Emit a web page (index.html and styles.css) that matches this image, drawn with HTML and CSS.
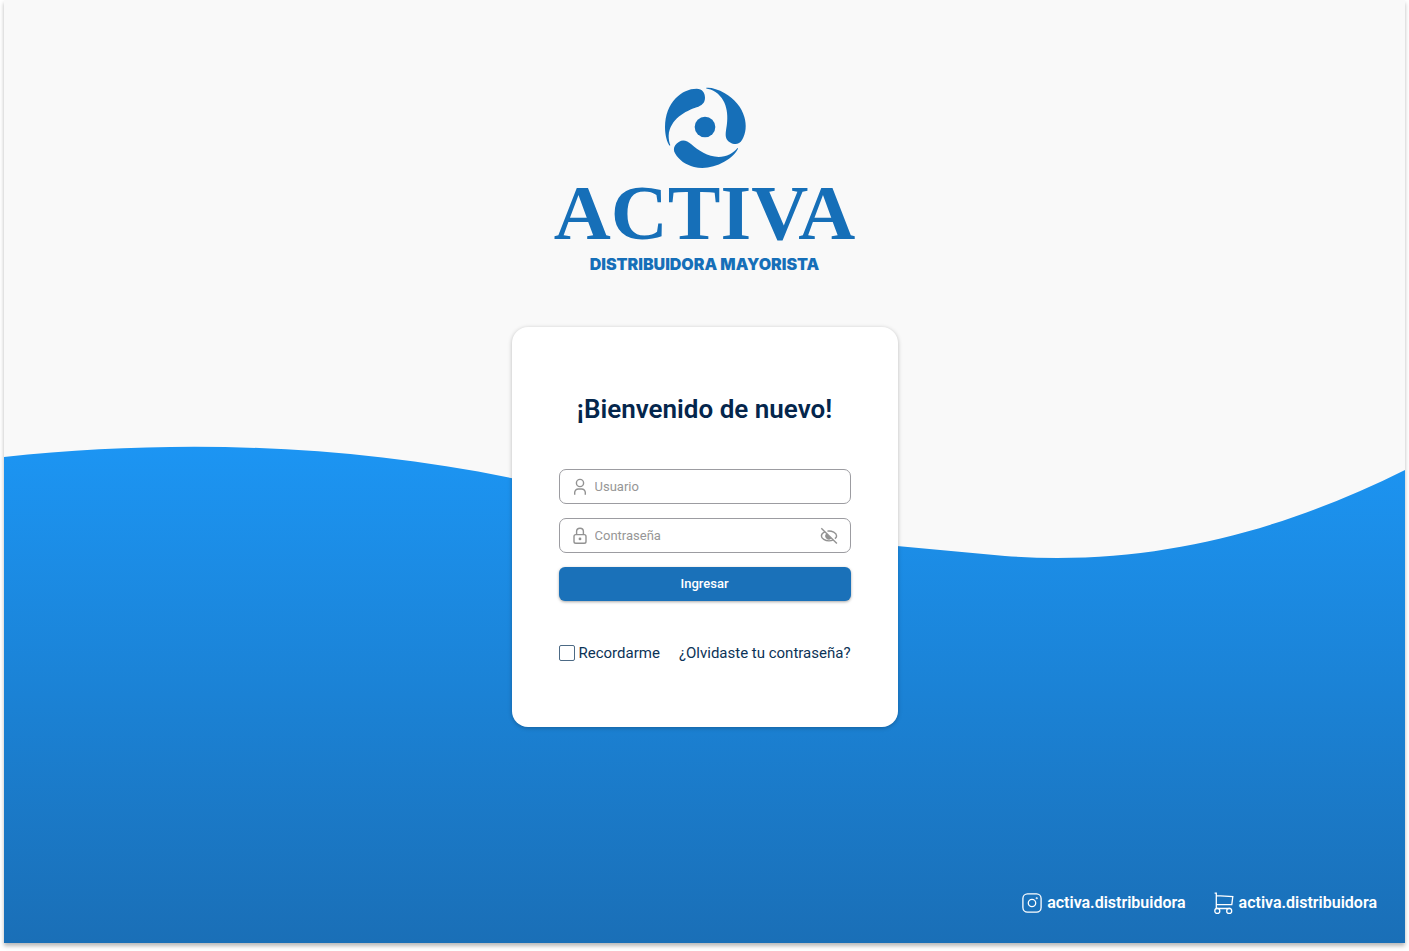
FILE: index.html
```html
<!DOCTYPE html>
<html lang="es">
<head>
<meta charset="utf-8">
<meta name="viewport" content="width=device-width, initial-scale=1">
<title>Activa - Ingresar</title>
<link rel="stylesheet" href="styles.css">
</head>
<body>
<div class="frame">
  <svg class="wave" viewBox="0 0 1401 943" preserveAspectRatio="none" aria-hidden="true">
    <defs>
      <linearGradient id="sea" gradientUnits="userSpaceOnUse" x1="0" y1="446" x2="0" y2="943">
        <stop offset="0" stop-color="#1c95f3"/>
        <stop offset="1" stop-color="#1a6fb7"/>
      </linearGradient>
    </defs>
    <path fill="url(#sea)" d="M0 457C170 439 340 444 507 478C640 506 760 534 893 546L1001 556C1150 567 1280 530 1401 470V943H0Z"/>
  </svg>

  <header class="brand">
    <svg class="brand-mark" viewBox="24 30 252 252" fill="#166fb8" aria-hidden="true">
      <circle cx="150" cy="156" r="31"/>
      <path id="blade" d="M44 212C36 202 30 180 30 156C30 122 42 90 62 70C80 51 102 41 125 41C142 41 150 53 150 68C150 84 140 91 125 97C92 108 45 132 41 182C41 194 43 203 46 211Z"/>
      <use href="#blade" transform="rotate(120 149 157)"/>
      <use href="#blade" transform="rotate(240 149 157)"/>
    </svg>
    <div class="brand-name">ACTIVA</div>
    <div class="brand-tag">DISTRIBUIDORA MAYORISTA</div>
  </header>

  <main class="card">
    <h1 class="title">¡Bienvenido de nuevo!</h1>
    <form class="form">
      <div class="field">
        <svg class="icon" viewBox="0 0 20 20" aria-hidden="true">
          <circle cx="10" cy="6" r="3.6"/>
          <path d="M4.700 17.800V15.600A3.600 3.600 0 0 1 8.300 12H11.700A3.600 3.600 0 0 1 15.300 15.600V17.800"/>
        </svg>
        <input class="input" type="text" placeholder="Usuario" aria-label="Usuario">
      </div>
      <div class="field">
        <svg class="icon" viewBox="0 0 20 20" aria-hidden="true">
          <rect x="4" y="8.600" width="12" height="8.600" rx="1.800"/>
          <path d="M6.600 8.600V5.600A3.400 3.400 0 0 1 13.400 5.600V8.600"/>
          <circle class="dot" cx="10" cy="12.900" r="1.400"/>
        </svg>
        <input class="input" type="password" placeholder="Contraseña" aria-label="Contraseña">
        <button class="reveal" type="button" aria-label="Mostrar contraseña">
          <svg class="icon" viewBox="0 0 20 20" aria-hidden="true">
            <path d="M5.800 5.900C3.800 6.900 2.400 8.400 2.400 9.900C2.400 12.500 6.200 14.900 10 14.900C11.400 14.900 12.700 14.700 13.800 14.200M8.400 5.100C13 4.400 17.600 7.200 17.600 9.900C17.600 10.900 16.900 11.800 15.900 12.600"/>
            <path class="dot" d="M7.300 7.500L12.300 12.400A3.200 3.200 0 0 1 7.300 7.500Z"/>
            <path d="M2.300 2.300L17.900 17.600"/>
          </svg>
        </button>
      </div>
      <button class="submit" type="submit">Ingresar</button>
      <div class="options">
        <label class="remember"><input class="check" type="checkbox">Recordarme</label>
        <a class="forgot" href="#">¿Olvidaste tu contraseña?</a>
      </div>
    </form>
  </main>

  <footer class="social">
    <a class="social-link" href="#">
      <svg class="social-icon" viewBox="0 0 20 20" aria-hidden="true">
        <rect x="0.900" y="0.900" width="18.200" height="18.200" rx="4.600"/>
        <circle cx="10" cy="10" r="3.700"/>
        <circle cx="14.700" cy="5.300" r="0.400"/>
      </svg>
      activa.distribuidora
    </a>
    <a class="social-link" href="#">
      <svg class="social-icon" viewBox="0 0 20 20" aria-hidden="true">
        <path d="M0.600 0.200H2.300V15.500H16.500M2.300 2.600L18.800 3.600L17.800 11.700H2.300"/>
        <circle cx="3.300" cy="17.900" r="2.500"/>
        <circle cx="15.200" cy="17.900" r="2.500"/>
      </svg>
      activa.distribuidora
    </a>
  </footer>
</div>
</body>
</html>
```

FILE: styles.css
```css
* {
  box-sizing: border-box;
}

body {
  margin: 0;
  padding: 0 4px 8px;
  background: #fff;
  font-family: Roboto, "Liberation Sans", sans-serif;
  color: #0c3357;
}

.frame {
  position: relative;
  display: flex;
  flex-direction: column;
  align-items: center;
  min-height: calc(100vh - 8px);
  padding: 85px 28px 29px;
  background: #f9f9f9;
  box-shadow: 0 3px 4px rgba(0, 0, 0, 0.28);
}

.wave {
  position: absolute;
  inset: 0;
  width: 100%;
  height: 100%;
}

.brand,
.card,
.social {
  position: relative;
}

.brand {
  display: flex;
  flex-direction: column;
  align-items: center;
  color: #166fb8;
}

.brand-mark {
  width: 84px;
  height: 84px;
}

.brand-name {
  font: bold 79px/88px "Liberation Serif", serif;
}

.brand-tag {
  font: 900 16px/14px Inter, sans-serif;
}

.card {
  width: 386px;
  max-width: 100%;
  margin-top: 56px;
  padding: 65px 47px 64px;
  border-radius: 16px;
  background: #fff;
  box-shadow: 0 1px 4px rgba(0, 0, 0, 0.25);
}

.title {
  margin: 0 0 43px;
  font-size: 26px;
  font-weight: 600;
  line-height: 34px;
  text-align: center;
  white-space: nowrap;
  color: #04264c;
}

.form {
  display: flex;
  flex-direction: column;
  gap: 14px;
}

.field {
  display: flex;
  align-items: center;
  height: 35px;
  padding: 0 11px 0 10px;
  border: 1px solid #9c9ca1;
  border-radius: 7px;
}

.icon {
  display: block;
  flex: none;
  width: 20px;
  height: 20px;
  fill: none;
  stroke: #929292;
  stroke-width: 1.4;
}

.dot {
  fill: #929292;
  stroke: none;
}

.input {
  flex: 1;
  min-width: 0;
  padding: 0 5px;
  border: 0;
  outline: 0;
  background: none;
  font: 13px/20px Roboto, sans-serif;
  color: #04264c;
}

.input::placeholder {
  color: #969696;
  opacity: 1;
}

.reveal {
  padding: 0;
  border: 0;
  background: none;
}

.submit {
  height: 34px;
  border: 0;
  border-radius: 6px;
  background: #1a71b9;
  box-shadow: 0 1px 3px rgba(0, 0, 0, 0.35);
  font: 500 13px/20px Roboto, sans-serif;
  color: #fff;
}

.options {
  display: flex;
  justify-content: space-between;
  align-items: center;
  margin-top: 28px;
  font-size: 15px;
  line-height: 20px;
  white-space: nowrap;
}

.remember {
  display: flex;
  align-items: center;
  gap: 4px;
}

.check {
  appearance: none;
  width: 16px;
  height: 16px;
  margin: 0;
  border: 1px solid #4c6a85;
  border-radius: 2px;
}

.check:checked {
  background: #1a71b9;
}

.forgot {
  color: inherit;
  text-decoration: none;
}

.social {
  display: flex;
  gap: 28px;
  align-self: flex-end;
  margin-top: auto;
}

.social-link {
  display: flex;
  align-items: center;
  gap: 5px;
  font-size: 16px;
  font-weight: 600;
  line-height: 22px;
  color: #fff;
  text-decoration: none;
}

.social-icon {
  width: 20px;
  height: 20px;
  overflow: visible;
  fill: none;
  stroke: #fff;
  stroke-width: 1.3;
}
```
